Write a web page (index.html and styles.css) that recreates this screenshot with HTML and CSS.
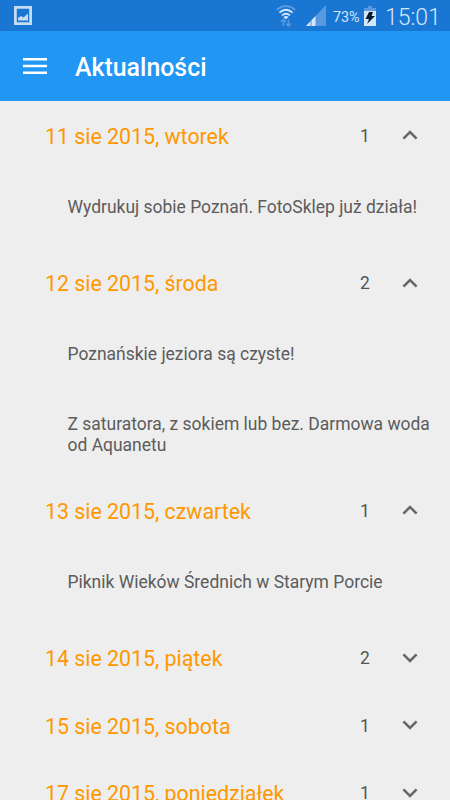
FILE: index.html
```html
<!DOCTYPE html>
<html lang="pl">
<head>
<meta charset="utf-8">
<title>Aktualności</title>
<link rel="stylesheet" href="styles.css">
</head>
<body>
<div class="status">
  <svg class="picture" width="18" height="19" viewBox="0 0 18 19"><path d="M1.400 1.400h15.200v16.200H1.400z" fill="none" stroke="#c4ddf5" stroke-width="2.800"/><path d="M4 14.500v-2.500l3-2 2.500 1.500L14 7.500v7z" fill="#c4ddf5"/></svg>
  <svg class="wifi" width="20" height="22" viewBox="0 0 20 22"><g fill="none" stroke="#d5e6f8" stroke-width="1.900"><path d="M.7 4.800Q10-2.800 19.300 4.800" stroke="#5899df"/><path d="M3.400 7.600Q10 2 16.600 7.600"/><path d="M6 10.400Q10 7 14 10.400"/></g><path d="M7.400 12Q10 10 12.600 12L10 14.300z" fill="#d5e6f8"/><path d="M7.500 21v-6.500M5 17l2.500-2.500L10 17M12.500 14.500V21M10 18.500l2.500 2.500 2.500-2.500" fill="none" stroke="#5899df" stroke-width="1.600"/></svg>
  <svg class="signal" width="20" height="21" viewBox="0 0 20 21"><path d="M20 0v21H0z" fill="#5899df"/><path d="M0 21l4.500-4.700V21zM5.500 21v-5.800l4-4.200v10z" fill="#d5e6f8"/></svg>
  <span class="percent">73%</span>
  <svg class="battery" width="12" height="20" viewBox="0 0 12 20"><path d="M4 0h4v2h4v3H0V2h4z" fill="#5899df"/><path d="M0 5h12v15H0z" fill="#d5e6f8"/><path d="M5 6h4L7.500 10H11l-8 8 2-5H1.500z" fill="#071c33"/></svg>
  <span class="clock">15:01</span>
</div>
<header class="bar">
  <svg class="menu" width="24" height="16" viewBox="0 0 24 16"><path d="M0 1.200h24M0 8h24M0 14.800h24" stroke="#fff" stroke-width="2.400"/></svg>
  <h1 class="title">Aktualności</h1>
</header>
<main class="list">
  <div class="day"><span class="date">11 sie 2015, wtorek</span><span class="count">1</span><svg class="chevron" width="16" height="10" viewBox="0 0 16 10"><path d="M1.400 8.600L8 2l6.600 6.600"/></svg></div>
  <div class="item">Wydrukuj sobie Poznań. FotoSklep już działa!</div>
  <div class="day"><span class="date">12 sie 2015, środa</span><span class="count">2</span><svg class="chevron" width="16" height="10" viewBox="0 0 16 10"><path d="M1.400 8.600L8 2l6.600 6.600"/></svg></div>
  <div class="item">Poznańskie jeziora są czyste!</div>
  <div class="item">Z saturatora, z sokiem lub bez. Darmowa woda od Aquanetu</div>
  <div class="day"><span class="date">13 sie 2015, czwartek</span><span class="count">1</span><svg class="chevron" width="16" height="10" viewBox="0 0 16 10"><path d="M1.400 8.600L8 2l6.600 6.600"/></svg></div>
  <div class="item">Piknik Wieków Średnich w Starym Porcie</div>
  <div class="day"><span class="date">14 sie 2015, piątek</span><span class="count">2</span><svg class="chevron" width="16" height="10" viewBox="0 0 16 10"><path d="M1.400 1.400L8 8l6.600-6.600"/></svg></div>
  <div class="day"><span class="date">15 sie 2015, sobota</span><span class="count">1</span><svg class="chevron" width="16" height="10" viewBox="0 0 16 10"><path d="M1.400 1.400L8 8l6.600-6.600"/></svg></div>
  <div class="day"><span class="date">17 sie 2015, poniedziałek</span><span class="count">1</span><svg class="chevron" width="16" height="10" viewBox="0 0 16 10"><path d="M1.400 1.400L8 8l6.600-6.600"/></svg></div>
</main>
</body>
</html>
```
FILE: styles.css
```css
* { box-sizing: border-box; }
body {
  margin: 0;
  height: 800px;
  overflow: hidden;
  display: flex;
  flex-direction: column;
  background: #eee;
  font-family: Roboto, sans-serif;
}
svg { display: block; flex: none; }
.status {
  flex: none;
  height: 31px;
  display: flex;
  align-items: center;
  background: #1976d2;
  color: #d5e6f8;
  padding-right: 11px;
}
.picture { margin: 0 auto 0 14px; }
.wifi { margin-right: 10px; }
.signal { margin-right: 7px; }
.percent { font-size: 14.3px; width: 31px; margin-top: 2px; }
.battery { margin-right: 9px; }
.clock { font-size: 23px; font-weight: 300; width: 54px; line-height: 31px; margin-top: 3px; white-space: nowrap; }
.bar {
  flex: none;
  height: 70px;
  display: flex;
  align-items: center;
  padding-left: 23px;
  background: #2196f3;
}
.title { margin: 3px 0 0 28px; font-size: 24.9px; font-weight: 500; line-height: 30px; color: #fff; }
.list { flex: none; padding-top: 1px; }
.day { height: 67.5px; display: flex; align-items: center; padding: 0 32px 0 45px; }
.date { flex: 1; padding-top: 1px; font-size: 21.35px; color: #ff9800; }
.count { width: 42px; font-size: 17.5px; color: #555; }
.chevron { margin-bottom: 1px; fill: none; stroke: #686868; stroke-width: 2.6; }
.item { height: 80px; padding: 27.4px 15px 0 67.5px; font-size: 17.48px; line-height: 20.5px; color: #5c5c5c; }
.item + .item { height: 90px; margin-top: -10px; }
```
